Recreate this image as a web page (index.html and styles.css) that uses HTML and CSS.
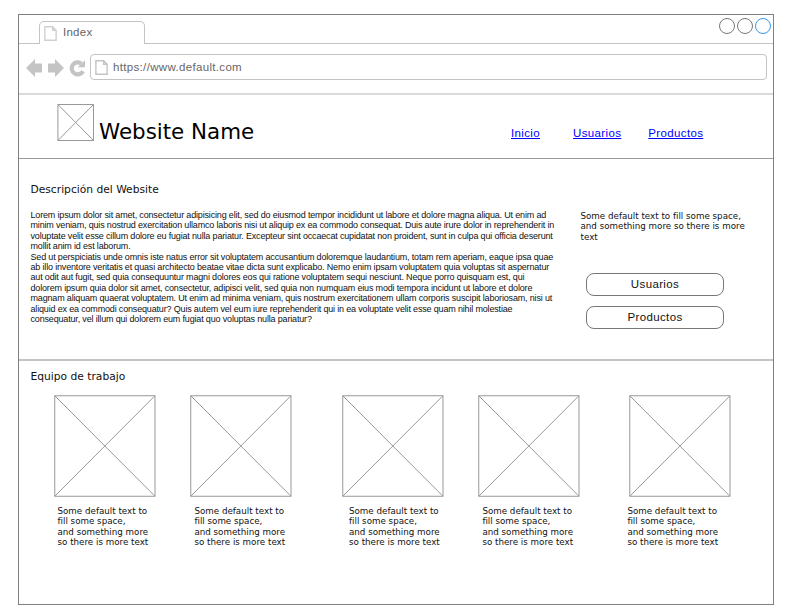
FILE: index.html
```html
<!DOCTYPE html>
<html lang="es">
<head>
<meta charset="utf-8">
<title>Index</title>
<link rel="stylesheet" href="styles.css">
</head>
<body>
<svg width="0" height="0" class="defs">
  <symbol id="page" viewBox="0 0 12 14"><path d="M.75 .75H8L11.250 4V13.250H.75ZM8 .75V4H11.250" fill="none" stroke="currentColor" stroke-width="1.3"/></symbol>
  <symbol id="box" viewBox="0 0 102 102"><path d="M.75 .75H101V101.250H.75ZM.75 .75L101 101.250M101 .75L.75 101.250" fill="none" stroke="#999" stroke-width="1"/></symbol>
</svg>
<div class="window">
  <div class="tabs">
    <div class="tab"><svg class="tab-icon"><use href="#page"/></svg><span>Index</span></div>
    <div class="controls"><i></i><i></i><i class="active"></i></div>
  </div>
  <div class="toolbar">
    <svg class="nav" width="60" height="20" viewBox="0 0 60 20" fill="#c4c4c4">
      <path d="M0 10L9 1V5.500H16V14.500H9V19Z"/>
      <path d="M38 10L29 1V5.500H22V14.500H29V19Z"/>
      <path d="M57 13.200A6 6 0 1 1 55.400 5.600" fill="none" stroke="#c4c4c4" stroke-width="4.200"/>
      <path d="M59 2.200V9.300H51.700Z"/>
    </svg>
    <div class="address"><svg class="url-icon"><use href="#page"/></svg><span>https://www.default.com</span></div>
  </div>
  <header>
    <svg class="logo" viewBox="0 0 38 38"><path d="M.9 .5H36.500V36.500H.9ZM.9 .5L36.500 36.500M36.500 .5L.9 36.500" fill="none" stroke="#999"/></svg>
    <h1>Website Name</h1>
    <nav><a href="#">Inicio</a><a href="#">Usuarios</a><a href="#">Productos</a></nav>
  </header>
  <section class="about">
    <div class="story">
      <h2>Descripción del Website</h2>
      <p>Lorem ipsum dolor sit amet, consectetur adipisicing elit, sed do eiusmod tempor incididunt ut labore et dolore magna aliqua. Ut enim ad<br>minim veniam, quis nostrud exercitation ullamco laboris nisi ut aliquip ex ea commodo consequat. Duis aute irure dolor in reprehenderit in<br>voluptate velit esse cillum dolore eu fugiat nulla pariatur. Excepteur sint occaecat cupidatat non proident, sunt in culpa qui officia deserunt<br>mollit anim id est laborum.<br>Sed ut perspiciatis unde omnis iste natus error sit voluptatem accusantium doloremque laudantium, totam rem aperiam, eaque ipsa quae<br>ab illo inventore veritatis et quasi architecto beatae vitae dicta sunt explicabo. Nemo enim ipsam voluptatem quia voluptas sit aspernatur<br>aut odit aut fugit, sed quia consequuntur magni dolores eos qui ratione voluptatem sequi nesciunt. Neque porro quisquam est, qui<br>dolorem ipsum quia dolor sit amet, consectetur, adipisci velit, sed quia non numquam eius modi tempora incidunt ut labore et dolore<br>magnam aliquam quaerat voluptatem. Ut enim ad minima veniam, quis nostrum exercitationem ullam corporis suscipit laboriosam, nisi ut<br>aliquid ex ea commodi consequatur? Quis autem vel eum iure reprehenderit qui in ea voluptate velit esse quam nihil molestiae<br>consequatur, vel illum qui dolorem eum fugiat quo voluptas nulla pariatur?</p>
    </div>
    <aside>
      <p class="note">Some default text to fill some space,<br>and something more so there is more<br>text</p>
      <button>Usuarios</button>
      <button>Productos</button>
    </aside>
  </section>
  <section class="team">
    <h2>Equipo de trabajo</h2>
    <div class="members">
      <figure><svg><use href="#box"/></svg><figcaption class="note">Some default text to<br>fill some space,<br>and something more<br>so there is more text</figcaption></figure>
      <figure><svg><use href="#box"/></svg><figcaption class="note">Some default text to<br>fill some space,<br>and something more<br>so there is more text</figcaption></figure>
      <figure><svg><use href="#box"/></svg><figcaption class="note">Some default text to<br>fill some space,<br>and something more<br>so there is more text</figcaption></figure>
      <figure><svg><use href="#box"/></svg><figcaption class="note">Some default text to<br>fill some space,<br>and something more<br>so there is more text</figcaption></figure>
      <figure><svg><use href="#box"/></svg><figcaption class="note">Some default text to<br>fill some space,<br>and something more<br>so there is more text</figcaption></figure>
    </div>
  </section>
</div>
</body>
</html>
```
FILE: styles.css
```css
* { box-sizing: border-box; }
body { margin: 0; background: #fff; color: #111; font-family: "Liberation Sans", sans-serif; }
.defs { display: block; }
.window { width: 756px; height: 591px; margin: 14px 0 0 18px; border: 1px solid #808080; }
h1, h2, p, figure { margin: 0; font-weight: 400; }
h1, h2, .note { font-family: "DejaVu Sans", sans-serif; white-space: nowrap; }
.tabs { display: flex; justify-content: space-between; align-items: flex-start; height: 29px; border-bottom: 1px solid #c4c4c4; }
.tab { display: flex; align-items: center; width: 106px; height: 23px; margin: 6px 0 0 20px; padding-left: 4px; border: 1px solid #c4c4c4; border-bottom: 0; border-radius: 5px 5px 0 0; background: #fff; color: #666; font-size: 11.5px; letter-spacing: .25px; }
.tab span { margin: 0 0 2px 6px; }
.tab-icon { width: 13px; height: 15px; color: #d0d0d0; }
.controls { display: flex; gap: 2px; margin: 3px 2px 0 0; }
.controls i { width: 16px; height: 16px; border: 1px solid #777; border-radius: 50%; }
.controls .active { border-color: #3399ee; }
.toolbar { display: flex; height: 51px; padding: 10px 6px 0 7px; border-bottom: 2px solid #dadada; }
.nav { margin-top: 4px; flex: none; }
.address { display: flex; align-items: center; flex: 1; height: 26px; margin-left: 4px; padding-left: 4px; border: 1px solid #c4c4c4; border-radius: 4px; color: #666; font-size: 11.5px; letter-spacing: .33px; }
.address span { margin-left: 5px; }
.url-icon { width: 13px; height: 15px; color: #c4c4c4; }
header { display: flex; align-items: flex-start; height: 64px; border-bottom: 1px solid #999; }
.logo { width: 38px; height: 38px; margin: 9px 0 0 38px; }
h1 { width: 160px; margin: 24px 0 0 4px; font-size: 21.4px; line-height: 26px; color: #000; }
header nav { display: flex; margin: 31px 0 0 252px; font-size: 11.5px; line-height: 14px; letter-spacing: .36px; }
header nav a { color: #00f; }
header nav a + a { margin-left: 33px; }
header nav a:last-child { margin-left: 27px; }
h2 { font-size: 10.7px; line-height: 14px; }
.about { display: flex; height: 202px; padding: 24px 0 0 11.5px; border-bottom: 2px solid #c4c4c4; }
.story { width: 550px; }
.story p { margin-top: 13px; font-size: 9px; line-height: 10.4px; letter-spacing: -.168px; white-space: nowrap; }
.note { font-size: 8.72px; line-height: 10.4px; }
aside { padding-top: 28px; }
aside button { display: block; width: 138px; height: 23px; margin: 10px 0 0 5.5px; padding: 0 0 2px; border: 1px solid #777; border-radius: 8px; background: #fff; font: 11.5px "Liberation Sans", sans-serif; letter-spacing: .36px; color: #111; }
.note + button { margin-top: 31px; }
.team h2 { margin: 9px 0 0 11.5px; }
.members { display: flex; margin: 11px 0 0 35px; }
figure { width: 102px; }
figure svg { display: block; width: 102px; height: 102px; }
figure + figure { margin-left: 34.4px; }
figure:nth-child(3) { margin-left: 49.6px; }
figure:nth-child(5) { margin-left: 49px; }
figcaption { margin: 9px 0 0 4px; }
figure:first-child figcaption { margin-left: 3.5px; }
figure:nth-child(3) figcaption { margin-left: 7px; }
figure:nth-child(5) figcaption { margin-left: -2px; }
```
